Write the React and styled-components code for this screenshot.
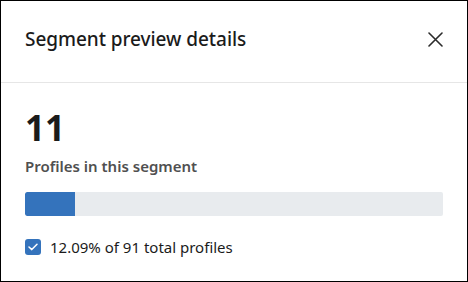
import React from "react";
import styled, { createGlobalStyle } from "styled-components";

const GlobalStyle = createGlobalStyle`
  html, body {
    margin: 0;
    padding: 0;
    background: #ffffff;
  }
  * {
    box-sizing: border-box;
  }
`;

const Panel = styled.section`
  width: 468px;
  height: 282px;
  border: 1px solid #000;
  background: #fff;
  font-family: "Noto Sans", "Open Sans", sans-serif;
  color: #1b1b1b;
`;

const Header = styled.header`
  height: 82px;
  display: flex;
  align-items: center;
  justify-content: space-between;
  padding: 0 20px 0 24px;
  border-bottom: 1px solid #e6e6e6;
  h2 {
    margin: 0 0 5px;
    font-size: 19px;
    font-weight: 500;
    letter-spacing: -0.05px;
  }
`;

const CloseButton = styled.button`
  width: 24px;
  height: 24px;
  margin-bottom: 5px;
  padding: 0;
  border: none;
  background: none;
  display: flex;
  align-items: center;
  justify-content: center;
  cursor: pointer;
`;

const Body = styled.div`
  padding: 23px 24px 0;
`;

const Count = styled.div`
  font-size: 35px;
  font-weight: 700;
  line-height: 44px;
  color: #1b1b1b;
`;

const Caption = styled.div`
  margin-top: 6px;
  font-size: 15px;
  font-weight: 600;
  color: #505050;
`;

const Track = styled.div`
  margin-top: 16px;
  width: 418px;
  height: 24px;
  border-radius: 2px;
  background: #e8ebee;
  overflow: hidden;
`;

const Fill = styled.div`
  height: 100%;
  background: #3473bc;
  border-radius: 2px 0 0 2px;
`;

const Legend = styled.div`
  margin-top: 21px;
  display: flex;
  align-items: center;
  gap: 9px;
  font-size: 15px;
  color: #1b1b1b;
`;

const Check = styled.span`
  width: 16px;
  height: 16px;
  border-radius: 3px;
  background: #3473bc;
  display: flex;
  align-items: center;
  justify-content: center;
`;

const App = () => {
  const share = 50 / 418;
  return (
    <>
      <GlobalStyle />
      <Panel>
        <Header>
          <h2>Segment preview details</h2>
          <CloseButton aria-label="Close">
            <svg width="15" height="15" viewBox="0 0 15 15">
              <path
                d="M1 1 L14 14 M14 1 L1 14"
                stroke="#2b2b2b"
                strokeWidth="1.6"
                strokeLinecap="round"
              />
            </svg>
          </CloseButton>
        </Header>
        <Body>
          <Count>11</Count>
          <Caption>Profiles in this segment</Caption>
          <Track>
            <Fill style={{ width: `${share * 100}%` }} />
          </Track>
          <Legend>
            <Check>
              <svg width="10" height="8" viewBox="0 0 10 8">
                <path
                  d="M1 4 L3.8 6.6 L9 1.2"
                  fill="none"
                  stroke="#fff"
                  strokeWidth="1.5"
                  strokeLinecap="round"
                  strokeLinejoin="round"
                />
              </svg>
            </Check>
            12.09% of 91 total profiles
          </Legend>
        </Body>
      </Panel>
    </>
  );
};

export default App;
